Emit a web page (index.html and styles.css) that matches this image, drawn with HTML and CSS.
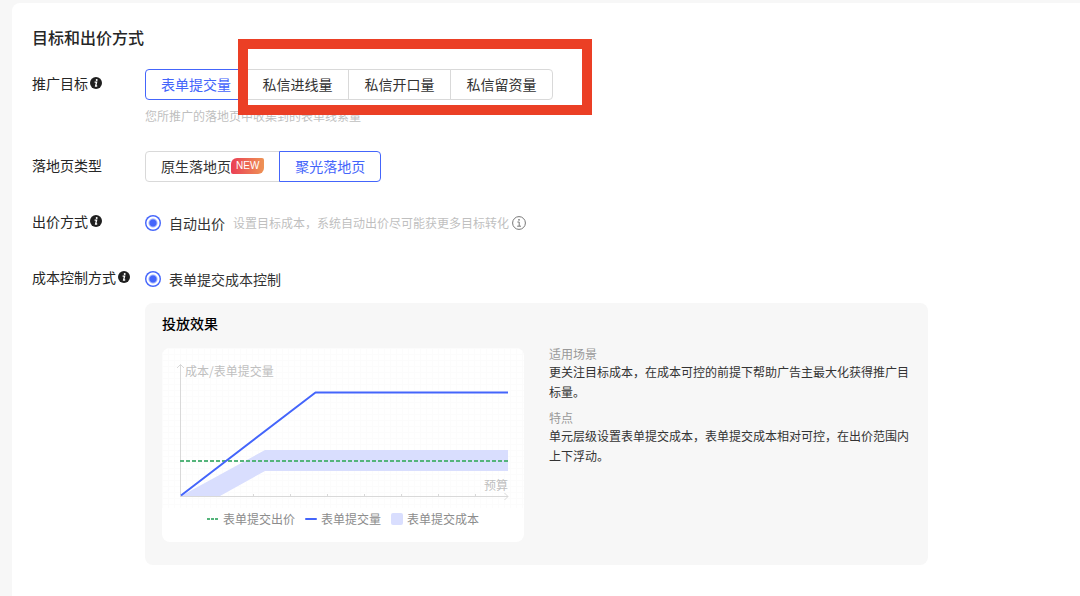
FILE: index.html
```html
<!DOCTYPE html>
<html lang="zh-CN">
<head>
<meta charset="utf-8">
<meta name="viewport" content="width=device-width, initial-scale=1">
<title>目标和出价方式</title>
<link rel="stylesheet" href="styles.css">
</head>
<body>
<svg class="defs" width="0" height="0" aria-hidden="true">
  <symbol id="info-solid" viewBox="0 0 12 12">
    <circle cx="6" cy="6" r="6" fill="#1f1f1f"/>
    <circle cx="6.7" cy="3.1" r="1" fill="#fff"/>
    <path d="M4.6 5.200H6.600L5.600 9H7.200" fill="none" stroke="#fff" stroke-width="1.300"/>
  </symbol>
</svg>
<main class="card">
  <h1 class="card-title">目标和出价方式</h1>
  <form class="form">
    <section class="row">
      <div class="row-label">推广目标<svg class="info"><use href="#info-solid"/></svg></div>
      <div class="row-body">
        <div class="segments segments-goal" role="group" aria-label="推广目标">
          <button type="button" class="segment active" aria-pressed="true">表单提交量</button>
          <button type="button" class="segment">私信进线量</button>
          <button type="button" class="segment">私信开口量</button>
          <button type="button" class="segment">私信留资量</button>
          <span class="highlight"></span>
        </div>
        <p class="hint hint-below">您所推广的落地页中收集到的表单线索量</p>
      </div>
    </section>

    <section class="row">
      <div class="row-label">落地页类型</div>
      <div class="row-body">
        <div class="segments" role="group" aria-label="落地页类型">
          <button type="button" class="segment">原生落地页<span class="badge">NEW</span></button>
          <button type="button" class="segment active" aria-pressed="true">聚光落地页</button>
        </div>
      </div>
    </section>

    <section class="row">
      <div class="row-label">出价方式<svg class="info"><use href="#info-solid"/></svg></div>
      <div class="row-body option">
        <label class="choice"><input class="radio" type="radio" name="bid" checked>自动出价</label>
        <span class="hint">设置目标成本，系统自动出价尽可能获更多目标转化</span>
        <svg class="info-outline" viewBox="0 0 14 14" aria-hidden="true">
          <circle cx="7" cy="7" r="6.4"/>
          <path d="M5.4 6H7.2V10M5.2 10.2H9"/>
          <circle class="dot" cx="7" cy="3.8" r="0.9"/>
        </svg>
      </div>
    </section>

    <section class="row">
      <div class="row-label">成本控制方式<svg class="info"><use href="#info-solid"/></svg></div>
      <div class="row-body">
        <div class="option">
          <label class="choice"><input class="radio" type="radio" name="cost" checked>表单提交成本控制</label>
        </div>
        <div class="panel">
          <h2 class="panel-title">投放效果</h2>
          <div class="panel-grid">
            <figure class="chart">
              <svg class="plot" viewBox="0 0 362 160" role="img" aria-label="投放效果示意图">
                <defs>
                  <pattern id="mesh" width="6" height="6" patternUnits="userSpaceOnUse">
                    <path d="M0 .5H6M.5 0V6" stroke="#fcfcfc" fill="none"/>
                  </pattern>
                </defs>
                <rect width="362" height="160" fill="url(#mesh)"/>
                <path class="axis" d="M18.5 148V16.5M15 20L18.5 16.5L22 20M18 148.5H346M342.500 145L346 148.500L342.500 152M54.500 146V148M91.500 146V148M128.500 146V148M165.500 146V148M202.500 146V148M239.500 146V148M276.500 146V148M313.500 146V148"/>
                <path class="band" d="M19 148L103 102H346V123H103L58 148Z"/>
                <path class="bid-line" d="M18 113H346"/>
                <path class="volume-line" d="M19 147.500L153.500 44.500H346"/>
                <text class="axis-text" x="23" y="28">成本/表单提交量</text>
                <text class="axis-text" x="346" y="142" text-anchor="end">预算</text>
              </svg>
              <figcaption class="legend">
                <span class="legend-item"><svg class="key" viewBox="0 0 12 12"><path class="key-bid" d="M0 6H12"/></svg>表单提交出价</span>
                <span class="legend-item"><svg class="key" viewBox="0 0 12 12"><path class="key-volume" d="M1 6H11"/></svg>表单提交量</span>
                <span class="legend-item"><svg class="key" viewBox="0 0 12 12"><rect class="key-cost" width="12" height="12" rx="2"/></svg>表单提交成本</span>
              </figcaption>
            </figure>
            <div class="notes">
              <h3 class="note-title">适用场景</h3>
              <p class="note-text">更关注目标成本，在成本可控的前提下帮助广告主最大化获得推广目标量。</p>
              <h3 class="note-title">特点</h3>
              <p class="note-text">单元层级设置表单提交成本，表单提交成本相对可控，在出价范围内上下浮动。</p>
            </div>
          </div>
        </div>
      </div>
    </section>
  </form>
</main>
</body>
</html>
```
FILE: styles.css
```css
* {
  box-sizing: border-box;
}

body {
  display: flex;
  flex-direction: column;
  min-height: 100vh;
  margin: 0;
  padding: 3px 0 0 12px;
  background: #f7f7f7;
  color: #333;
  font-family: "Noto Sans CJK SC", "Liberation Sans", sans-serif;
  font-size: 14px;
  line-height: 20px;
}

h1,
h2,
h3,
p,
figure {
  margin: 0;
}

.defs {
  position: absolute;
}

.card {
  flex: 1;
  padding: 22px 20px 31px;
  background: #fff;
  border-radius: 8px 0 0 0;
}

.card-title {
  margin-bottom: 20px;
  font-size: 16px;
  font-weight: 500;
  line-height: 24px;
  color: #262626;
}

.form {
  display: flex;
  flex-direction: column;
  gap: 25px;
}

.row {
  display: grid;
  grid-template-columns: 113px minmax(0, 1fr);
}

.row-label {
  display: flex;
  align-items: center;
  gap: 2px;
  height: 27px;
  color: #262626;
  white-space: nowrap;
}

.info {
  width: 12px;
  height: 12px;
}

.segments {
  position: relative;
  display: inline-flex;
  vertical-align: top;
}

.segments-goal {
  display: inline-grid;
  grid-template-columns: repeat(4, 102px);
}

.segment {
  display: flex;
  align-items: center;
  justify-content: center;
  height: 31px;
  padding: 0 15px 2px;
  border: 1px solid #d9d9d9;
  background: #fff;
  color: #333;
  font: inherit;
  white-space: nowrap;
  cursor: pointer;
}

.segment + .segment {
  margin-left: -1px;
}

.segment:first-child {
  border-radius: 4px 0 0 4px;
}

.segment:nth-last-child(1 of .segment) {
  border-radius: 0 4px 4px 0;
}

.segment.active {
  z-index: 1;
  border-color: #4465fb;
  color: #4465fb;
}

.badge {
  padding: 0 5px;
  border-radius: 6px 2px 6px 2px;
  background: linear-gradient(90deg, #ea3f55, #ee9355);
  color: #fff;
  font-family: "Liberation Sans", sans-serif;
  font-size: 10px;
  line-height: 16px;
}

/* Callout frame drawn over the three message goals */
.highlight {
  position: absolute;
  z-index: 2;
  top: -30px;
  left: 93px;
  width: 354px;
  height: 76px;
  border: 10px solid #eb3f25;
  pointer-events: none;
}

.hint {
  font-size: 12px;
  color: #bfbfbf;
}

.hint-below {
  margin-top: 6px;
}

.option {
  display: flex;
  align-items: center;
  height: 31px;
}

.option .hint {
  margin: 0 3px 0 8px;
}

.choice {
  display: flex;
  align-items: center;
  gap: 8px;
}

.radio {
  appearance: none;
  width: 16px;
  height: 16px;
  margin: 0;
  border-radius: 50%;
  background: radial-gradient(circle, #4465fb 3px, #fff 5px, #fff 6px, #4465fb 7px);
}

.info-outline {
  width: 14px;
  height: 14px;
  fill: none;
  stroke: #777;
}

.info-outline .dot {
  fill: #777;
  stroke: none;
}

.panel {
  max-width: 783px;
  margin-top: 9px;
  padding: 10px 16px 23px;
  border-radius: 8px;
  background: #f7f7f7;
}

.panel-title {
  margin-left: 1px;
  margin-bottom: 13px;
  font-size: 14px;
  font-weight: 500;
  line-height: 20px;
  color: #000;
}

.panel-grid {
  display: grid;
  grid-template-columns: 363px minmax(0, 1fr);
  gap: 25px;
}

.chart {
  margin: 2px 0 0 1px;
  padding-bottom: 13px;
  border-radius: 8px;
  background: #fff;
  overflow: hidden;
}

.plot {
  display: block;
  width: 100%;
}

.axis {
  fill: none;
  stroke: #d9d9d9;
}

.axis-text {
  fill: #bfbfbf;
  font-size: 12px;
}

.band {
  fill: #d9defe;
}

.bid-line {
  fill: none;
  stroke: #55b47b;
  stroke-width: 2;
  stroke-dasharray: 4 2;
}

.volume-line {
  fill: none;
  stroke: #4465fb;
  stroke-width: 2;
  stroke-linejoin: round;
}

.legend {
  display: flex;
  justify-content: center;
  gap: 10px;
  padding-top: 1px;
  font-size: 12px;
  color: #8c8c8c;
}

.legend-item {
  display: flex;
  align-items: center;
  gap: 4px;
}

.key {
  width: 12px;
  height: 12px;
}

.key-bid {
  stroke: #55b47b;
  stroke-width: 2;
  stroke-dasharray: 3 1;
}

.key-volume {
  stroke: #4465fb;
  stroke-width: 2;
  stroke-linecap: round;
}

.key-cost {
  fill: #d9defe;
}

.notes {
  font-size: 12px;
}

.note-title {
  font-size: 12px;
  font-weight: 400;
  line-height: 16px;
  color: #999;
}

.note-text {
  line-height: 20px;
}

.note-text + .note-title {
  margin-top: 8px;
}
```
